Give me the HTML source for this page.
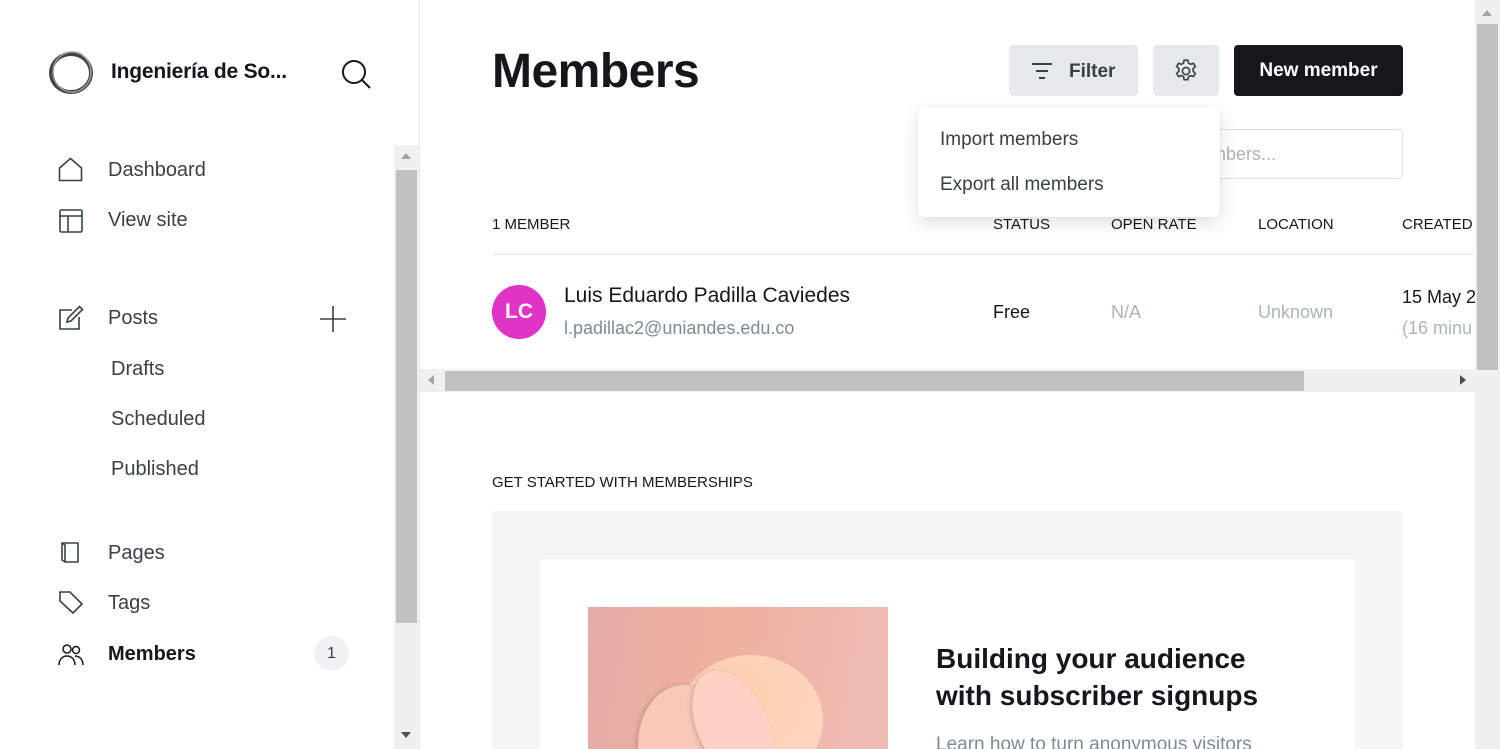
<!DOCTYPE html>
<html><head><meta charset="utf-8"><style>
*{box-sizing:border-box;margin:0;padding:0}
html,body{width:1500px;height:749px;overflow:hidden}
body{background:#fff;font-family:"Liberation Sans",sans-serif;position:relative;color:#15171a}
.abs{position:absolute}
.nav{position:absolute;left:108px;font-size:20px;color:#394047;line-height:24px}
.sub{position:absolute;left:111px;font-size:20px;color:#394047;line-height:24px}
.ic{position:absolute;left:58px}
.th{position:absolute;top:216px;font-size:15px;color:#15171a;line-height:18px}
</style></head><body>
<div class="abs" style="left:0;top:0;width:420px;height:749px;border-right:1px solid #e6e9eb"></div>
<svg class="abs" style="left:48px;top:50px" width="46" height="46" viewBox="0 0 46 46"><ellipse cx="23" cy="23" rx="20" ry="19" fill="none" stroke="#444" stroke-width="4"/><ellipse cx="24" cy="22" rx="19" ry="20" fill="none" stroke="#999" stroke-width="1.5"/></svg>
<div class="abs" style="left:111px;top:60px;font-size:21px;font-weight:bold;color:#15171a;letter-spacing:-.2px">Ingeniería de So...</div>
<svg class="abs" style="left:340px;top:58px" width="32" height="32" viewBox="0 0 32 32" fill="none" stroke="#15171a" stroke-width="2"><circle cx="14" cy="14" r="11"/><path d="M22 22l8 8"/></svg>
<svg class="ic" style="top:157px" width="26" height="26" viewBox="0 0 26 26" fill="none" stroke="#394047" stroke-width="1.6"><path d="M1.5 11L12.5 1.5 23.5 11v12.5h-22z"/></svg>
<div class="nav" style="top:158px">Dashboard</div>
<svg class="ic" style="top:208px" width="26" height="26" viewBox="0 0 26 26" fill="none" stroke="#394047" stroke-width="1.6"><rect x="2" y="2" width="22" height="22" rx="1.5"/><path d="M2 8h22M10 8v16"/></svg>
<div class="nav" style="top:208px">View site</div>
<svg class="ic" style="top:305px" width="26" height="26" viewBox="0 0 26 26" fill="none" stroke="#394047" stroke-width="1.6"><path d="M14 5H2v19h19V12"/><path d="M21.5 1.5l3 3L13 16l-4 1 1-4z"/></svg>
<div class="nav" style="top:306px">Posts</div>
<svg class="abs" style="left:319px;top:305px" width="28" height="28" viewBox="0 0 28 28" stroke="#394047" stroke-width="1.6"><path d="M14 1v26M1 14h26"/></svg>
<div class="sub" style="top:357px">Drafts</div>
<div class="sub" style="top:407px">Scheduled</div>
<div class="sub" style="top:457px">Published</div>
<svg class="ic" style="top:540px" width="26" height="26" viewBox="0 0 26 26" fill="none" stroke="#394047" stroke-width="1.6"><path d="M4 3h16v19H7l-3-2z"/><path d="M4 3l3 2v17"/></svg>
<div class="nav" style="top:541px">Pages</div>
<svg class="ic" style="top:590px" width="26" height="26" viewBox="0 0 26 26" fill="none" stroke="#394047" stroke-width="1.6"><path d="M2 2h10l12 12-9 9L2 11z"/></svg>
<div class="nav" style="top:591px">Tags</div>
<svg class="ic" style="top:641px" width="26" height="26" viewBox="0 0 26 26" fill="none" stroke="#15171a" stroke-width="1.5"><circle cx="9" cy="8" r="4"/><path d="M1 24c0-6 4-9 8-9s8 3 8 9"/><circle cx="18" cy="9" r="3.5"/><path d="M17 15c4 0 8 3 8 9"/></svg>
<div class="nav" style="top:642px;font-weight:bold;color:#15171a">Members</div>
<div class="abs" style="left:314px;top:636px;width:35px;height:35px;border-radius:50%;background:#eff1f3;font-size:16px;color:#394047;text-align:center;line-height:35px">1</div>
<div class="abs" style="left:394px;top:145px;width:25px;height:604px;background:#f0f0f0"></div>
<div class="abs" style="left:396px;top:170px;width:21px;height:453px;background:#c1c1c1"></div>
<div class="abs" style="left:401px;top:153px;border:5px solid transparent;border-bottom:6px solid #a3a3a3;border-top:0"></div>
<div class="abs" style="left:401px;top:732px;border:5px solid transparent;border-top:6px solid #505050;border-bottom:0"></div>
<div class="abs" style="left:492px;top:44px;font-size:48px;font-weight:bold;letter-spacing:-.5px">Members</div>
<div class="abs" style="left:1009px;top:45px;width:129px;height:51px;background:#e6e9eb;border-radius:4px"></div>
<svg class="abs" style="left:1031px;top:62px" width="22" height="18" viewBox="0 0 22 18" stroke="#394047" stroke-width="2"><path d="M1 2h20M5 9h12M8 16h6"/></svg>
<div class="abs" style="left:1069px;top:61px;font-size:19px;font-weight:bold;color:#394047">Filter</div>
<div class="abs" style="left:1153px;top:45px;width:66px;height:51px;background:#e6e9eb;border-radius:4px"></div>
<svg class="abs" style="left:1173px;top:58px" width="26" height="26" viewBox="0 0 24 24" fill="none" stroke="#394047" stroke-width="1.5"><circle cx="12" cy="12" r="3.3"/><path d="M10.3 2h3.4l.6 2.7 2 1.1 2.6-.9 1.7 2.9-2 1.9v2.6l2 1.9-1.7 2.9-2.6-.9-2 1.1-.6 2.7h-3.4l-.6-2.7-2-1.1-2.6.9-1.7-2.9 2-1.9v-2.6l-2-1.9 1.7-2.9 2.6.9 2-1.1z"/></svg>
<div class="abs" style="left:1234px;top:45px;width:169px;height:51px;background:#15171a;border-radius:4px;color:#fff;font-size:19px;font-weight:bold;text-align:center;line-height:51px">New member</div>
<div class="abs" style="left:1180px;top:129px;width:223px;height:50px;border:1px solid #dde1e5;border-radius:4px;font-size:18px;color:#abb4be;padding:14px 0 0 30px">mbers...</div>
<div class="abs" style="left:918px;top:107px;width:302px;height:110px;background:#fff;border-radius:5px;box-shadow:0 0 1px rgba(0,0,0,.15),0 6px 18px rgba(0,0,0,.12)"></div>
<div class="abs" style="left:940px;top:129px;font-size:19px;color:#394047">Import members</div>
<div class="abs" style="left:940px;top:174px;font-size:19px;color:#394047">Export all members</div>
<div class="th" style="left:492px">1 MEMBER</div>
<div class="th" style="left:993px">STATUS</div>
<div class="th" style="left:1111px">OPEN RATE</div>
<div class="th" style="left:1258px">LOCATION</div>
<div class="th" style="left:1402px">CREATED</div>
<div class="abs" style="left:492px;top:254px;width:983px;height:1px;background:#e6e9eb"></div>
<div class="abs" style="left:492px;top:285px;width:54px;height:54px;border-radius:50%;background:#e034c6;color:#fff;font-weight:bold;font-size:21px;text-align:center;line-height:54px">LC</div>
<div class="abs" style="left:564px;top:284px;font-size:21px;color:#15171a">Luis Eduardo Padilla Caviedes</div>
<div class="abs" style="left:564px;top:318px;font-size:18px;color:#7c8b9a">l.padillac2@uniandes.edu.co</div>
<div class="abs" style="left:993px;top:302px;font-size:18px">Free</div>
<div class="abs" style="left:1111px;top:302px;font-size:18px;color:#abb4be">N/A</div>
<div class="abs" style="left:1258px;top:302px;font-size:18px;color:#abb4be">Unknown</div>
<div class="abs" style="left:1402px;top:287px;font-size:18px;white-space:nowrap;width:73px;overflow:hidden">15 May 2</div>
<div class="abs" style="left:1402px;top:318px;font-size:18px;color:#abb4be;white-space:nowrap;width:73px;overflow:hidden">(16 minu</div>
<div class="abs" style="left:420px;top:369px;width:1055px;height:23px;background:#f0f0f0"></div>
<div class="abs" style="left:445px;top:371px;width:859px;height:20px;background:#c1c1c1"></div>
<div class="abs" style="left:428px;top:375px;border:5px solid transparent;border-right:6px solid #a3a3a3;border-left:0"></div>
<div class="abs" style="left:1460px;top:375px;border:5px solid transparent;border-left:6px solid #505050;border-right:0"></div>
<div class="abs" style="left:1475px;top:0;width:25px;height:749px;background:#f0f0f0"></div>
<div class="abs" style="left:1477px;top:24px;width:21px;height:346px;background:#c1c1c1"></div>
<div class="abs" style="left:1482px;top:10px;border:5px solid transparent;border-bottom:6px solid #a3a3a3;border-top:0"></div>
<div class="abs" style="left:492px;top:474px;font-size:15px">GET STARTED WITH MEMBERSHIPS</div>
<div class="abs" style="left:492px;top:511px;width:911px;height:238px;background:#f4f5f5;border-radius:4px 4px 0 0"></div>
<div class="abs" style="left:540px;top:559px;width:815px;height:190px;background:#fff;border-radius:4px 4px 0 0"></div>
<div class="abs" style="left:588px;top:607px;width:300px;height:142px;background:linear-gradient(100deg,#e4aca6,#eeaf9f 40%,#efbdb5);overflow:hidden">
<div class="abs" style="left:90px;top:48px;width:145px;height:130px;border-radius:50%;background:radial-gradient(circle at 40% 30%,#fccfac,#fcd6c8)"></div>
<div class="abs" style="left:50px;top:78px;width:90px;height:120px;border-radius:50%;background:#f8c8b8;box-shadow:-2px 0 4px rgba(120,100,100,.3)"></div>
<div class="abs" style="left:110px;top:60px;width:70px;height:120px;border-radius:50%;background:#fdd0c3;transform:rotate(-25deg);box-shadow:-2px 0 4px rgba(120,100,100,.3)"></div>
</div>
<div class="abs" style="left:936px;top:640px;font-size:28px;font-weight:bold;line-height:37px">Building your audience<br>with subscriber signups</div>
<div class="abs" style="left:936px;top:734px;font-size:19px;color:#7c8b9a">Learn how to turn anonymous visitors</div>
</body></html>
